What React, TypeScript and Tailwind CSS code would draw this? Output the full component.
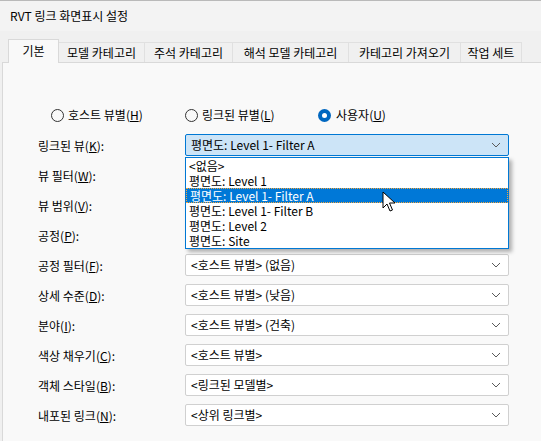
import React from 'react';

const font = { fontFamily: '"Noto Sans CJK KR", "Noto Sans", sans-serif' };

const tabs = [
  { label: '기본', w: 'w-[51px]' },
  { label: '모델 카테고리', w: 'w-[86px]' },
  { label: '주석 카테고리', w: 'w-[88px]' },
  { label: '해석 모델 카테고리', w: 'w-[116px]' },
  { label: '카테고리 가져오기', w: 'w-[112px]' },
  { label: '작업 세트', w: 'w-[61px]' },
];

const rows = [
  { label: '링크된 뷰', key: 'K', value: '평면도: Level 1- Filter A', active: true },
  { label: '뷰 필터', key: 'W', value: '' },
  { label: '뷰 범위', key: 'V', value: '' },
  { label: '공정', key: 'P', value: '' },
  { label: '공정 필터', key: 'F', value: '<호스트 뷰별> (없음)' },
  { label: '상세 수준', key: 'D', value: '<호스트 뷰별> (낮음)' },
  { label: '분야', key: 'I', value: '<호스트 뷰별> (건축)' },
  { label: '색상 채우기', key: 'C', value: '<호스트 뷰별>' },
  { label: '객체 스타일', key: 'B', value: '<링크된 모델별>' },
  { label: '내포된 링크', key: 'N', value: '<상위 링크별>' },
];

const options = [
  '<없음>',
  '평면도: Level 1',
  '평면도: Level 1- Filter A',
  '평면도: Level 1- Filter B',
  '평면도: Level 2',
  '평면도: Site',
];

const Chevron = () => (
  <svg width="10" height="6" viewBox="0 0 10 6" fill="none">
    <path d="M1 1l4 4 4-4" stroke="#5a5a5a" strokeWidth="1" />
  </svg>
);

const Radio = ({ checked }: { checked?: boolean }) =>
  checked ? (
    <span className="flex h-[13px] w-[13px] items-center justify-center rounded-full bg-[#0067c0]">
      <span className="h-[5px] w-[5px] rounded-full bg-white" />
    </span>
  ) : (
    <span className="h-[13px] w-[13px] rounded-full border border-[#333] bg-[#f9f9f9]" />
  );

const Mnemonic = ({ text, k }: { text: string; k: string }) => (
  <span>
    {text}(<u>{k}</u>)
  </span>
);

export default function App() {
  return (
    <div
      className="relative flex h-[441px] w-[541px] flex-col overflow-hidden bg-[#f0f0f0] text-[12px] leading-[16px] text-black"
      style={font}
    >
      {/* 제목 */}
      <div className="flex h-[31px] shrink-0 items-center border-t border-[#b9b9b9] bg-[#f3f3f3] pl-[10px]">
        RVT 링크 화면표시 설정
      </div>

      <div className="flex flex-1 flex-col pl-[2px]">
        {/* 탭 */}
        <div className="flex h-[31px] items-end pl-[6px]">
          {tabs.map((t, i) =>
            i === 0 ? (
              <div
                key={t.label}
                className={`${t.w} relative z-10 -mb-px flex h-[24px] items-start justify-center border border-b-0 border-[#d9d9d9] bg-[#f9f9f9] pt-[3px]`}
              >
                {t.label}
              </div>
            ) : (
              <div
                key={t.label}
                className={`${t.w} flex h-[20px] items-center justify-center border border-l-0 border-b-0 border-[#e0e0e0] bg-[#f0f0f0]`}
              >
                {t.label}
              </div>
            )
          )}
        </div>

        {/* 패널 */}
        <div className="flex-1 border-l border-t border-[#d9d9d9] bg-[#f9f9f9] pl-[35px] pt-[41px]">
          <div className="flex h-[22px] items-center pl-[13px]">
            <div className="flex w-[134px] items-center gap-[4px]">
              <Radio />
              <Mnemonic text="호스트 뷰별" k="H" />
            </div>
            <div className="flex w-[133px] items-center gap-[4px]">
              <Radio />
              <Mnemonic text="링크된 뷰별" k="L" />
            </div>
            <div className="flex items-center gap-[5px]">
              <Radio checked />
              <Mnemonic text="사용자" k="U" />
            </div>
          </div>

          <div className="mt-[8px] flex flex-col gap-[8px]">
            {rows.map((r) => (
              <div key={r.label} className="flex h-[22px] items-center">
                <div className="w-[147px] pt-[2px]">
                  <Mnemonic text={r.label} k={r.key} />:
                </div>
                <div
                  className={`flex h-[22px] w-[324px] items-center justify-between rounded-[2px] border pl-[5px] pr-[7px] ${
                    r.active
                      ? 'relative border-[#0078d4] bg-[#cce4f7]'
                      : 'border-[#d0d0d0] bg-white'
                  }`}
                >
                  <span>{r.value}</span>
                  <Chevron />
                  {r.active && (
                    <div className="absolute left-[-1px] top-[22px] z-20 w-[324px] border border-[#0078d4] bg-white shadow-[3px_3px_4px_rgba(0,0,0,0.3)]">
                      {options.map((o, i) => (
                        <div
                          key={o}
                          className={`flex h-[15px] items-center overflow-hidden pl-[3px] leading-[15px] ${
                            i === 2
                              ? 'border border-dotted border-[#f4a63c] bg-[#0078d7] pl-[2px] text-white'
                              : ''
                          }`}
                        >
                          {o}
                        </div>
                      ))}
                    </div>
                  )}
                </div>
              </div>
            ))}
          </div>
        </div>
      </div>

      {/* 마우스 커서 */}
      <svg
        className="absolute left-[382px] top-[191px] z-30"
        width="14"
        height="22"
        viewBox="0 0 14 22"
      >
        <path
          d="M1 1v16l4-4 3 7 2.5-1-3-7h5.5z"
          fill="#fff"
          stroke="#000"
          strokeWidth="1"
          strokeLinejoin="round"
        />
      </svg>
    </div>
  );
}
